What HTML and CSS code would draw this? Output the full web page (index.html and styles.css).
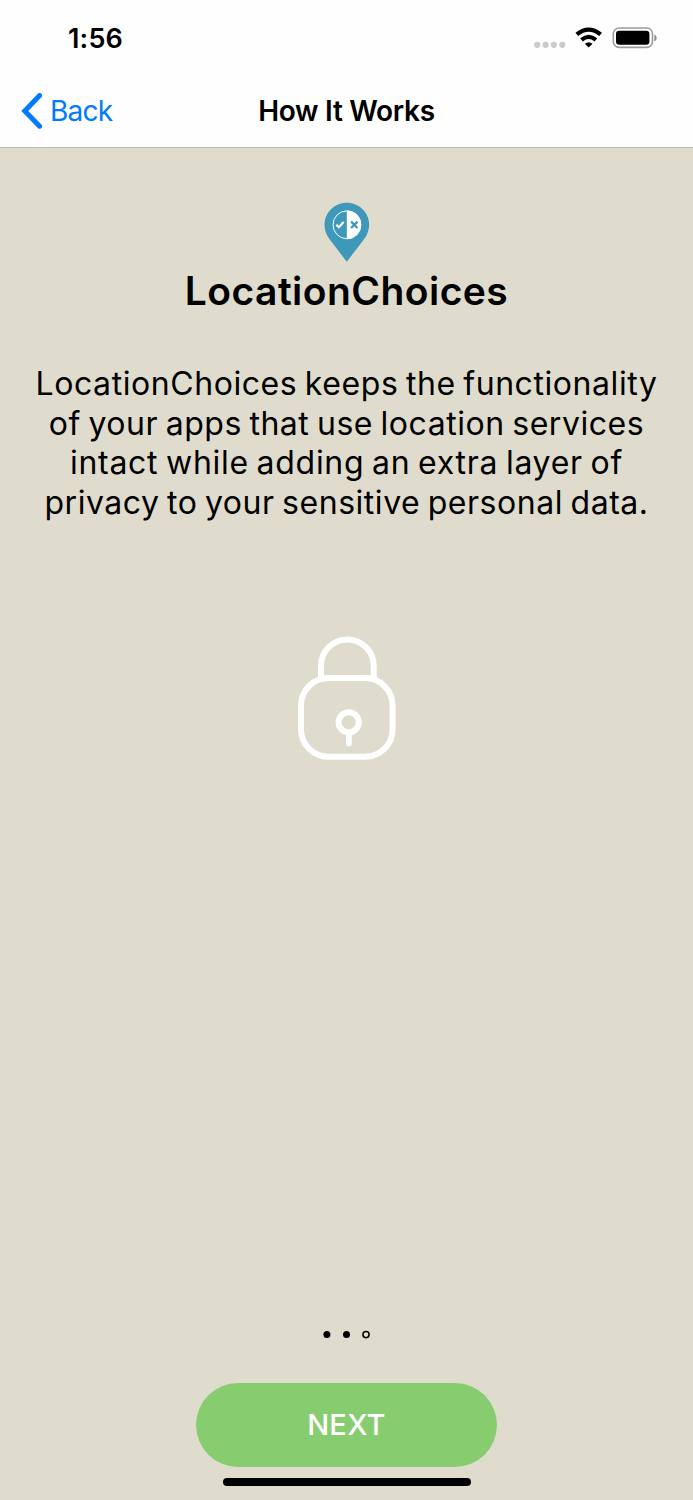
FILE: index.html
```html
<!DOCTYPE html>
<html lang="en">
<head>
<meta charset="utf-8">
<title>How It Works</title>
<link rel="stylesheet" href="styles.css">
</head>
<body>
<div class="screen">
  <header class="header">
    <div class="status-bar">
      <span class="clock">1:56</span>
      <svg class="status-icons" width="124" height="24" viewBox="533 26 124 24">
        <g fill="#cbcbcb"><circle cx="537.2" cy="44.8" r="3.1"/><circle cx="545.6" cy="44.8" r="3.1"/><circle cx="553.9" cy="44.8" r="3.1"/><circle cx="562.3" cy="44.8" r="3.1"/></g>
        <g fill="none" stroke="#000" stroke-width="4.2">
          <path d="M576.8 34.4Q588.7 24.8 600.6 34.4"/>
          <path d="M581.5 39.8Q588.7 33.8 595.9 39.8"/>
        </g>
        <path d="M584.9 43.7Q588.7 40.6 592.5 43.7L588.7 47.5Z"/>
        <rect x="613.3" y="28" width="39.2" height="19.4" rx="5.8" fill="#fff" stroke="#9b9b9b" stroke-width="1.6"/>
        <rect x="616" y="30.8" width="33.4" height="14" rx="3.2"/>
        <path d="M654.4 34.4Q656.7 35.2 656.7 37.9T654.4 41.4Z" fill="#8c8c8c"/>
      </svg>
    </div>
    <nav class="nav-bar">
      <a class="back">
        <svg width="22" height="36" viewBox="0 0 22 36"><path d="M19.6 2.6 4.8 18 19.6 33.2" fill="none" stroke="#007aff" stroke-width="5" stroke-linecap="round" stroke-linejoin="miter"/></svg>
        <span class="back-label">Back</span>
      </a>
      <span class="nav-title">How It Works</span>
    </nav>
  </header>
  <main class="content">
    <svg class="pin" width="46" height="60" viewBox="324 202 46 60">
      <path d="M346.8 202.8C334.4 202.8 324.5 212.6 324.5 224.8C324.5 229.7 326.2 234.4 329.2 238.8L346.8 261.7 364.4 238.8C367.4 234.4 369.1 229.7 369.1 224.8C369.1 212.6 359.2 202.8 346.8 202.8Z" fill="#3d98b9"/>
      <circle cx="346.9" cy="224.8" r="13.9" fill="none" stroke="#fff" stroke-width="1"/>
      <path d="M346.8 210.4A14.4 14.4 0 0 1 346.8 239.2Z" fill="#fff"/>
      <path d="M336.3 224.7 338.9 227.3 343.6 222" fill="none" stroke="#fff" stroke-width="2.1"/>
      <path d="M351.1 221.6 357.5 228M357.5 221.6 351.1 228" fill="none" stroke="#3d98b9" stroke-width="2.3"/>
    </svg>
    <h1 class="title">LocationChoices</h1>
    <p class="copy">
      <span class="line line-a">LocationChoices keeps the functionality</span>
      <span class="line line-b">of your apps that use location services</span>
      <span class="line line-c">intact while adding an extra layer of</span>
      <span class="line line-d">privacy to your sensitive personal data.</span>
    </p>
    <svg class="lock" width="98" height="124" viewBox="298 636 98 124" fill="none" stroke="#fff" stroke-width="6">
      <path d="M321 678V665.8A26.3 26.3 0 0 1 373.7 665.8V678"/>
      <rect x="301" y="678" width="91.6" height="78.8" rx="27.5"/>
      <circle cx="348.7" cy="722.3" r="10.1"/>
      <path d="M348.9 733V743.4" stroke-linecap="round" stroke-width="5.8"/>
    </svg>
  </main>
  <footer class="footer">
    <svg class="dots" width="50" height="10" viewBox="0 0 50 10">
      <circle cx="4.9" cy="4.6" r="3.5"/>
      <circle cx="24.5" cy="4.6" r="3.5"/>
      <circle cx="44" cy="4.6" r="3.1" fill="none" stroke="#000" stroke-width="1.5"/>
    </svg>
    <button class="next">NEXT</button>
    <div class="home-indicator"></div>
  </footer>
</div>
</body>
</html>
```
FILE: styles.css
```css
* { box-sizing: border-box; }
body { margin: 0; font-family: Inter, "Liberation Sans", sans-serif; color: #000; }
.screen { width: 693px; height: 1500px; display: flex; flex-direction: column; background: #dfdccd; }
.header { height: 148px; background: #fefefe; border-bottom: 1px solid #bebdb9; }
.status-bar { height: 75px; display: flex; justify-content: space-between; padding: 26px 36px 0 68px; }
.clock { font-size: 27px; line-height: 26px; font-weight: 600; letter-spacing: .2px; }
.nav-bar { height: 72px; display: grid; grid-template-columns: 1fr auto 1fr; align-items: center; padding: 0 20px; }
.back { display: flex; align-items: center; gap: 8px; color: #007aff; }
.back-label { font-size: 28px; line-height: 36px; letter-spacing: -.8px; }
.nav-title { font-size: 28px; line-height: 36px; font-weight: 600; letter-spacing: -.3px; }
.content { flex: 1; display: flex; flex-direction: column; align-items: center; padding-top: 54px; }
.title { margin: 5px 0 0; font-size: 39px; line-height: 48px; font-weight: 600; letter-spacing: .45px; }
.copy { margin: 49px 0 0; font-size: 32px; line-height: 39.6px; text-align: center; }
.line { display: block; white-space: nowrap; word-spacing: -2px; }
.line-a { letter-spacing: .57px; }
.line-b { letter-spacing: .54px; }
.line-c { letter-spacing: .72px; }
.line-d { letter-spacing: .53px; }
.lock { margin-top: 114px; }
.footer { display: flex; flex-direction: column; align-items: center; padding-bottom: 14px; }
.dots { margin-bottom: 43px; }
.next { width: 301px; height: 84px; border: 0; border-radius: 42px; background: #87cd6f; color: #fff; font-family: inherit; font-size: 29px; font-weight: 500; padding: 0; letter-spacing: .3px; }
.home-indicator { width: 248px; height: 8px; border-radius: 4px; background: #000; margin-top: 11.5px; }
```
